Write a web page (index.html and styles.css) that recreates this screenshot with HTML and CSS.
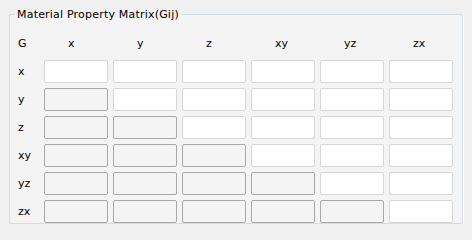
FILE: index.html
```html
<!DOCTYPE html>
<html lang="en">

<head>
    <meta charset="UTF-8">
    <title>Material Property Matrix</title>
    <link rel="stylesheet" href="styles.css">
</head>

<body>
    <fieldset class="grupo">
        <legend>Material Property Matrix(Gij)</legend>
        <div class="matriz">
            <span class="esquina">G</span>
            <span class="cab">x</span>
            <span class="cab">y</span>
            <span class="cab">z</span>
            <span class="cab">xy</span>
            <span class="cab">yz</span>
            <span class="cab">zx</span>

            <span class="fila">x</span>
            <input><input><input><input><input><input>

            <span class="fila">y</span>
            <input disabled><input><input><input><input><input>

            <span class="fila">z</span>
            <input disabled><input disabled><input><input><input><input>

            <span class="fila">xy</span>
            <input disabled><input disabled><input disabled><input><input><input>

            <span class="fila">yz</span>
            <input disabled><input disabled><input disabled><input disabled><input><input>

            <span class="fila">zx</span>
            <input disabled><input disabled><input disabled><input disabled><input disabled><input>
        </div>
    </fieldset>
</body>

</html>
```

FILE: styles.css
```css
body {
    font-family: "DejaVu Sans", sans-serif;
    font-size: 11px;
    color: #000;
    background: #f0f0f0;
    margin: 0;
    padding: 8px 9px 0;
}

.grupo {
    width: 454px;
    height: 216px;
    box-sizing: border-box;
    margin: 0;
    padding: 0;
    border: 1px solid #d5dce2;
    border-radius: 2px;
    box-shadow: 1px 1px 0 #fff;
    background: #f4f4f4;

    legend {
        margin-left: 5px;
        padding: 0 2px;
        letter-spacing: 0.2px;
    }
}

.matriz {
    display: grid;
    grid-template-columns: 21px repeat(6, 64px);
    grid-template-rows: 24px repeat(6, 23px);
    column-gap: 5px;
    row-gap: 5px;
    padding: 10px 0 0 8px;
    align-items: center;

    .cab {
        padding-left: 24px;
    }

    input {
        box-sizing: border-box;
        width: 64px;
        height: 23px;
        margin: 0;
        background: #fff;
        border: 1px solid #d6d6d6;
        border-radius: 2px;

        &:disabled {
            background: #f4f4f4;
            border-color: #a8a8a8;
        }
    }
}
```
